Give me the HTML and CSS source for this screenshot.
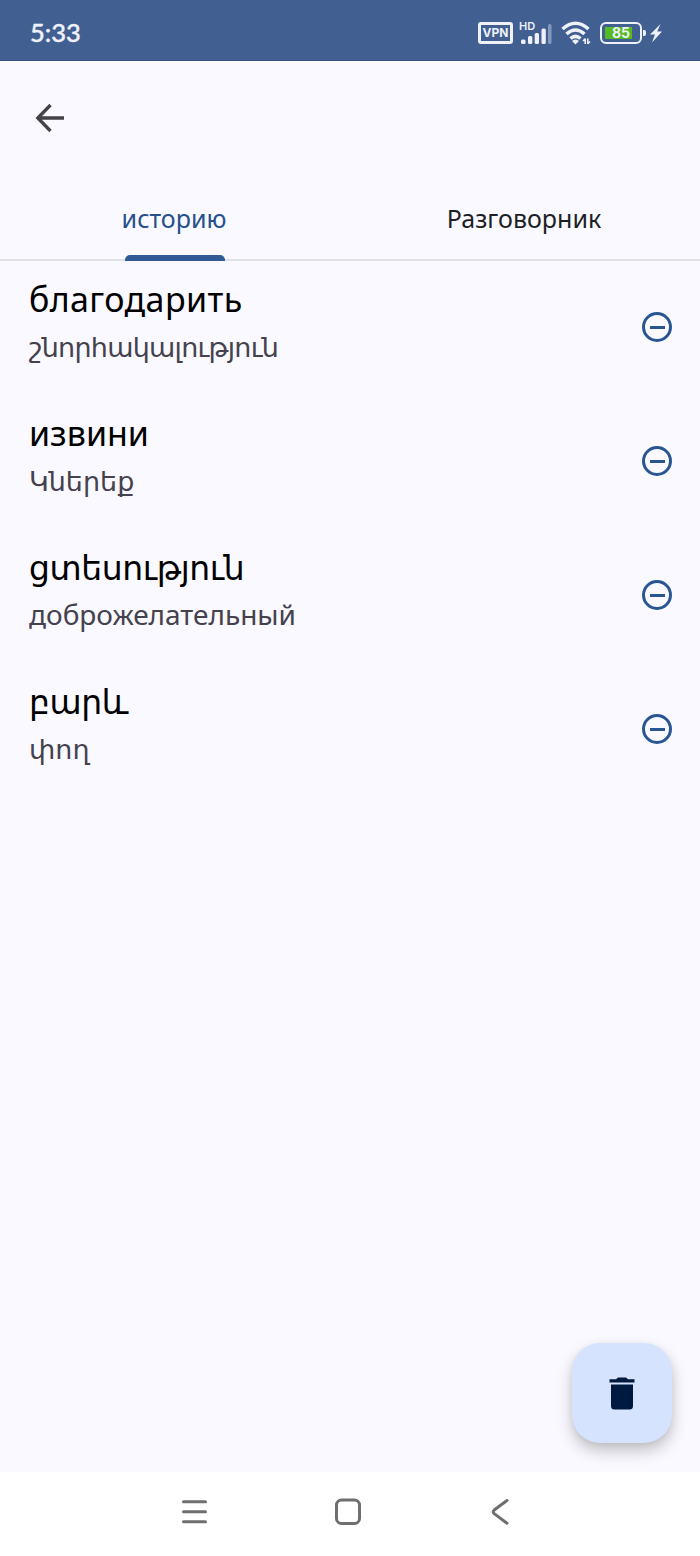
FILE: index.html
```html
<!DOCTYPE html>
<html lang="ru">
<head>
  <meta charset="UTF-8" />
  <title>Разговорник</title>
  <link rel="stylesheet" href="styles.css">
</head>
<body>

  <div class="status-bar">
    <span class="clock">5:33</span>
    <div class="status-icons">
      <span class="vpn">VPN</span>
      <div class="signal">
        <svg width="32" height="24" viewBox="0 0 32 24" fill="#eef1f8">
          <rect x="1" y="18.500" width="4.500" height="4.500" rx="1.500" />
          <rect x="8" y="15" width="4.300" height="8" rx="1.500" />
          <rect x="14.700" y="12" width="4.300" height="11" rx="1.500" />
          <rect x="21.500" y="7.500" width="4.300" height="15.500" rx="1.500" />
          <rect x="28" y="3" width="3.500" height="20" rx="1.500" fill="#8398bd" />
        </svg>
        <span class="hd">HD</span>
      </div>
      <svg class="wifi" width="30" height="24" viewBox="0 0 30 24" fill="none" stroke="#eef1f8" stroke-width="3.500">
        <path d="M1.500 8Q14.500 -3.500 27.500 8" />
        <path d="M5.500 13Q14.500 5 23.500 13" />
        <path d="M9.500 17.500Q14.500 13.200 19.500 17.500" />
        <path d="M11 20Q14.500 17 18 20L14.500 23.500z" fill="#eef1f8" stroke="none" />
        <path d="M24.200 23v-5.500M22 20l2.200-2.200M26.800 17.500V23M29 20.500l-2.200 2.200" stroke-width="1.600" />
      </svg>
      <div class="battery">
        <span class="charge">85</span>
      </div>
      <svg class="bolt" width="14" height="20" viewBox="0 0 14 20">
        <path d="M11.500 1L1 11.500h5L3 19.500l10-11H8.200z" fill="#eef1f8" />
      </svg>
    </div>
  </div>

  <div class="toolbar">
    <svg width="30" height="30" viewBox="0 0 30 30" fill="none" stroke="#45424b" stroke-width="3.300">
      <path d="M29 15H3M15.500 2L2.800 15l12.700 13" />
    </svg>
  </div>

  <div class="tabs">
    <div class="tab active">историю</div>
    <div class="tab">Разговорник</div>
  </div>

  <ul class="history">
    <li>
      <div class="words">
        <p class="word wide">благодарить</p>
        <p class="translation hy long">շնորհակալություն</p>
      </div>
      <span class="remove"></span>
    </li>
    <li>
      <div class="words">
        <p class="word">извини</p>
        <p class="translation hy">Կներեք</p>
      </div>
      <span class="remove"></span>
    </li>
    <li>
      <div class="words">
        <p class="word hy">ցտեսություն</p>
        <p class="translation">доброжелательный</p>
      </div>
      <span class="remove"></span>
    </li>
    <li>
      <div class="words">
        <p class="word hy">բարև</p>
        <p class="translation hy">փող</p>
      </div>
      <span class="remove"></span>
    </li>
  </ul>

  <div class="fab">
    <svg width="26" height="33" viewBox="0 0 26 33" fill="#001a3f">
      <path d="M0.500 2.200H7L9 0.500h8l2 1.700h6.500v3.300h-25z" />
      <path d="M2 7.500h22V29q0 3.500-3.500 3.500h-15Q2 32.500 2 29z" />
    </svg>
  </div>

  <div class="nav-bar">
    <svg width="26" height="28" viewBox="0 0 26 28" stroke="#6f6f6f" stroke-width="3" stroke-linecap="round">
      <path d="M2.500 3.700h22M2.500 13.800h22M2.500 23.800h22" />
    </svg>
    <svg width="28" height="28" viewBox="0 0 28 28" fill="none" stroke="#6f6f6f" stroke-width="3">
      <rect x="1.500" y="2" width="23" height="23.500" rx="5" />
    </svg>
    <svg width="18" height="28" viewBox="0 0 18 28" fill="none" stroke="#6f6f6f" stroke-width="3" stroke-linecap="round">
      <path d="M16 2.500L3.200 12q-2 1.800 0 3.600L16 25.200" />
    </svg>
  </div>

</body>
</html>
```

FILE: styles.css
```css
* {
  box-sizing: border-box;
}
body {
  margin: 0;
  height: 1556px;
  display: flex;
  flex-direction: column;
  position: relative;
  font-family: "Noto Sans", "DejaVu Sans", sans-serif;
  background: #faf9ff;
  color: #000;
}

.status-bar {
  height: 61px;
  flex: none;
  display: flex;
  align-items: center;
  justify-content: space-between;
  padding: 5px 37px 0 30px;
  background: #415f91;
  border-bottom: 1px solid #355286;
  color: #eef1f8;
}
.clock {
  margin-top: -2px;
  font-family: Lato, sans-serif;
  font-size: 25.5px;
  font-weight: 500;
  -webkit-text-stroke: 0.4px #eef1f8;
}
.status-icons {
  display: flex;
  align-items: center;
}
.vpn {
  width: 35px;
  height: 22px;
  border: 3px solid #eef1f8;
  border-radius: 3px;
  font: bold 12px/16px Inter, sans-serif;
  text-align: center;
}
.signal {
  position: relative;
  height: 24px;
  margin-left: 7px;
  margin-right: 1px;
}
.hd {
  position: absolute;
  left: -1px;
  top: 0;
  font: 600 11px/10px Inter, sans-serif;
}
.wifi {
  margin-left: 8px;
}
.battery {
  position: relative;
  width: 42px;
  height: 22px;
  margin-left: 9px;
  padding: 3px;
  border: 2px solid #eef1f8;
  border-radius: 6px;
}
.battery::after {
  content: "";
  position: absolute;
  right: -6px;
  top: 6px;
  width: 3px;
  height: 6px;
  border-radius: 0 2px 2px 0;
  background: #eef1f8;
}
.charge {
  display: block;
  width: 27px;
  height: 12px;
  padding-right: 2px;
  background: #55bb22;
  font: bold 14px/12px Inter, sans-serif;
  text-align: right;
}
.bolt {
  margin-left: 7px;
}

.toolbar {
  height: 115px;
  flex: none;
  padding: 42px 35px 0;
}

.tabs {
  height: 85px;
  flex: none;
  display: flex;
  border-bottom: 2px solid #e0e0e8;
}
.tab {
  position: relative;
  flex: 1;
  padding-right: 2px;
  text-align: center;
  font-size: 25px;
  line-height: 84px;
  color: #1d1f26;
}
.tab.active {
  color: #27508f;
}
.tab.active::after {
  content: "";
  position: absolute;
  left: 125px;
  bottom: -2px;
  width: 100px;
  height: 6px;
  border-radius: 5px 5px 0 0;
  background: #305a94;
}

.history {
  flex: 1;
  margin: 0;
  padding: 0 28px;
  list-style: none;
}
.history li {
  height: 134px;
  display: flex;
  align-items: center;
  justify-content: space-between;
  padding-bottom: 2px;
}
.words {
  align-self: flex-start;
  padding: 13px 0 0 1px;
}
.words p {
  margin: 0;
  white-space: nowrap;
}
.word {
  height: 50px;
  font-size: 34px;
  line-height: 50px;
}
.word.wide {
  letter-spacing: 0.4px;
}
.word.hy {
  padding-top: 2px;
  font-size: 33px;
  letter-spacing: -0.4px;
}
.translation {
  font-size: 28px;
  line-height: 44px;
  color: #45424e;
}
.translation.hy {
  padding-top: 2px;
  font-size: 27px;
}
.translation.long {
  letter-spacing: -0.75px;
}
.hy {
  font-family: "DejaVu Sans", sans-serif;
}
.remove {
  display: flex;
  align-items: center;
  justify-content: center;
  width: 30px;
  height: 30px;
  border: 3px solid #2a5593;
  border-radius: 50%;
}
.remove::before {
  content: "";
  width: 15px;
  height: 3px;
  background: #2a5593;
}

.fab {
  position: absolute;
  left: 572px;
  top: 1343px;
  width: 100px;
  height: 100px;
  display: flex;
  align-items: center;
  justify-content: center;
  border-radius: 28px;
  background: #d6e3ff;
  box-shadow: 0 8px 16px rgba(0, 0, 0, 0.22), 0 2px 6px rgba(0, 0, 0, 0.06);
}

.nav-bar {
  height: 84px;
  flex: none;
  display: flex;
  align-items: center;
  justify-content: space-between;
  padding: 0 191px 4px 181px;
  background: #fff;
}
```
